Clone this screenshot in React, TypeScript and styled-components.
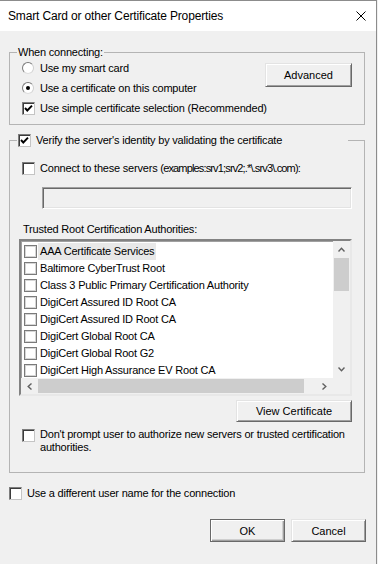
import React from "react";
import styled, { createGlobalStyle, css } from "styled-components";

const GlobalStyle = createGlobalStyle`
  html, body { margin: 0; padding: 0; background: #f0f0f0; }
  body {
    font-family: "Liberation Sans", Arial, sans-serif;
    font-size: 11px;
    letter-spacing: -0.2px;
    color: #000;
  }
  #root { width: 378px; height: 564px; overflow: hidden; }
`;

const Dialog = styled.div`
  width: 376px;
  height: 563px;
  border-top: 1px solid #8c8c8c;
  border-right: 1px solid #8c8c8c;
  background: #f0f0f0;
  display: flex;
  flex-direction: column;
`;

const TitleBar = styled.div`
  height: 30px;
  flex: none;
  background: #fff;
  display: flex;
  align-items: center;
  justify-content: space-between;
  padding: 0 10px 0 8px;
`;

const Title = styled.span`
  font-size: 12px;
  letter-spacing: -0.15px;
  line-height: 16px;
`;

const CloseButton = styled.span`
  display: flex;
  width: 10px;
  height: 10px;
  margin-top: -1px;
`;

const Body = styled.div`
  flex: 1;
  display: flex;
  flex-direction: column;
  padding: 15px 11px 0 9px;
`;

const GroupBox = styled.fieldset<{ $mt?: number }>`
  margin: ${(p) => p.$mt ?? 0}px 0 0 0;
  padding: 0;
  min-width: 0;
  border: 1px solid #b4b4b4;
`;

const Legend = styled.legend<{ $width?: number }>`
  margin-left: 7px;
  padding: 0 1px;
  height: 13px;
  line-height: 13px;
  display: flex;
  align-items: center;
  white-space: nowrap;
  ${(p) => p.$width && css`width: ${p.$width}px; box-sizing: border-box;`}
`;

const ConnectContent = styled.div`
  display: flex;
  justify-content: space-between;
  align-items: flex-start;
  margin-top: -1px;
  padding: 0 12px 6px 12px;
`;

const OptionColumn = styled.div`
  display: flex;
  flex-direction: column;
  min-width: 0;
`;

const OptionRow = styled.label<{ $h?: number; $top?: boolean; $mt?: number }>`
  display: flex;
  align-items: ${(p) => (p.$top ? "flex-start" : "center")};
  height: ${(p) => (p.$h ? `${p.$h}px` : "auto")};
  margin-top: ${(p) => p.$mt ?? 0}px;
  line-height: 13px;
  white-space: ${(p) => (p.$top ? "normal" : "pre")};
  cursor: default;
`;

const Tight = styled.span`
  letter-spacing: -0.85px;
`;

const CheckBox = styled.span<{ $flat?: boolean; $mt?: number }>`
  width: 13px;
  height: 13px;
  box-sizing: border-box;
  flex: none;
  margin-right: 5px;
  margin-top: ${(p) => p.$mt ?? 0}px;
  background: #fff;
  display: flex;
  align-items: center;
  justify-content: center;
  ${(p) =>
    p.$flat
      ? css`
          border: 1px solid #7a7a7a;
          box-shadow: inset 0 0 0 1px #d6d6d6;
        `
      : css`
          border: 1px solid;
          border-color: #7d7d7d #c4c4c4 #c4c4c4 #7d7d7d;
          box-shadow: inset 1px 1px 0 #3c3c3c;
        `}
`;

const RadioCircle = styled.span<{ $checked?: boolean }>`
  width: 12px;
  height: 12px;
  box-sizing: border-box;
  flex: none;
  margin-right: 6px;
  border-radius: 50%;
  border: 1px solid;
  border-color: #7a7a7a #cfcfcf #dcdcdc #7a7a7a;
  background: #fff;
  display: flex;
  align-items: center;
  justify-content: center;
  &::after {
    content: "";
    width: 4px;
    height: 4px;
    border-radius: 50%;
    background: ${(p) => (p.$checked ? "#000" : "transparent")};
  }
`;

const PushButton = styled.button<{ $w: number; $h?: number; $mt?: number; $end?: boolean; $default?: boolean }>`
  width: ${(p) => p.$w}px;
  height: ${(p) => p.$h ?? 22}px;
  margin-top: ${(p) => p.$mt ?? 0}px;
  align-self: ${(p) => (p.$end ? "flex-end" : "auto")};
  flex: none;
  padding: 0;
  font: inherit;
  color: #000;
  background: #f0f0f0;
  border: 1px solid;
  border-color: #e3e3e3 #696969 #696969 #e3e3e3;
  box-shadow: inset 1px 1px 0 #fff, inset -1px -1px 0 #a0a0a0;
  ${(p) =>
    p.$default &&
    css`
      border-color: #696969;
      box-shadow: inset 1px 1px 0 #fff, inset -1px -1px 0 #a0a0a0, inset -2px -2px 0 #cfcfcf;
    `}
`;

const VerifyContent = styled.div`
  display: flex;
  flex-direction: column;
  align-items: flex-start;
  padding: 0 12px 18px 12px;
`;

const ServerInput = styled.div`
  width: 310px;
  height: 22px;
  box-sizing: border-box;
  margin: 12px 0 0 20px;
  background: #f0f0f0;
  border: 1px solid;
  border-color: #a0a0a0 #fff #fff #a0a0a0;
  box-shadow: inset 1px 1px 0 #696969, inset -1px -1px 0 #e3e3e3;
`;

const FieldLabel = styled.div`
  margin: 14px 0 0 1px;
  line-height: 13px;
`;

const ListBox = styled.div`
  width: 333px;
  height: 157px;
  box-sizing: border-box;
  margin: 3px 0 0 -3px;
  border: 2px solid;
  border-color: #828282 #e8e8e8 #e8e8e8 #828282;
  box-shadow: inset 1px 1px 0 #a0a0a0;
  background: #fff;
  display: grid;
  grid-template-columns: 1fr 17px;
  grid-template-rows: 1fr 16px;
  overflow: hidden;
`;

const Items = styled.div`
  padding-top: 2px;
  overflow: hidden;
`;

const ItemRow = styled.div`
  height: 17px;
  display: flex;
  align-items: center;
  padding-left: 3px;
  white-space: nowrap;
`;

const ItemText = styled.span<{ $focused?: boolean }>`
  margin-left: -4px;
  padding: 0 2px;
  line-height: 17px;
  background: ${(p) => (p.$focused ? "#e8e8e8" : "transparent")};
`;

const VScroll = styled.div`
  background: #f0f0f0;
  display: flex;
  flex-direction: column;
`;

const HScroll = styled.div`
  background: #f0f0f0;
  display: flex;
  align-items: stretch;
`;

const Corner = styled.div`
  background: #f0f0f0;
`;

const ArrowCell = styled.div<{ $horizontal?: boolean }>`
  flex: none;
  width: ${(p) => (p.$horizontal ? "17px" : "auto")};
  height: ${(p) => (p.$horizontal ? "auto" : "17px")};
  display: flex;
  align-items: center;
  justify-content: center;
`;

const Thumb = styled.div<{ $horizontal?: boolean; $size: number }>`
  flex: none;
  background: #cdcdcd;
  ${(p) =>
    p.$horizontal
      ? css`width: ${p.$size}px; margin: 1px 0;`
      : css`height: ${p.$size}px; margin: 0 1px;`}
`;

const Track = styled.div`
  flex: 1;
`;

const WrapText = styled.span`
  width: 312px;
`;

const ButtonBar = styled.div`
  display: flex;
  justify-content: flex-end;
  gap: 6px;
  margin: 19px -1px 0 0;
`;

const CheckMark = () => (
  <svg width="9" height="9" viewBox="0 0 9 9">
    <polyline points="1,4 3.3,6.5 8,1.6" fill="none" stroke="#000" strokeWidth="1.9" />
  </svg>
);

type Dir = "up" | "down" | "left" | "right";
const Chevron = ({ dir }: { dir: Dir }) => {
  const vertical = dir === "up" || dir === "down";
  const pts: Record<Dir, string> = {
    up: "0.5,4.5 3.5,1.2 6.5,4.5",
    down: "0.5,0.5 3.5,3.8 6.5,0.5",
    left: "4.5,0.5 1.2,3.5 4.5,6.5",
    right: "0.5,0.5 3.8,3.5 0.5,6.5",
  };
  return (
    <svg width={vertical ? 7 : 5} height={vertical ? 5 : 7} viewBox={vertical ? "0 0 7 5" : "0 0 5 7"}>
      <polyline points={pts[dir]} fill="none" stroke="#606060" strokeWidth="1.4" />
    </svg>
  );
};

const CloseIcon = () => (
  <svg width="10" height="10" viewBox="0 0 10 10">
    <path d="M0.5 0.5 L9.5 9.5 M9.5 0.5 L0.5 9.5" stroke="#000" strokeWidth="1" fill="none" />
  </svg>
);

const Check = ({ checked, flat, mt }: { checked?: boolean; flat?: boolean; mt?: number }) => (
  <CheckBox $flat={flat} $mt={mt}>{checked && <CheckMark />}</CheckBox>
);

const certificates = [
  "AAA Certificate Services",
  "Baltimore CyberTrust Root",
  "Class 3 Public Primary Certification Authority",
  "DigiCert Assured ID Root CA",
  "DigiCert Assured ID Root CA",
  "DigiCert Global Root CA",
  "DigiCert Global Root G2",
  "DigiCert High Assurance EV Root CA",
];

export default function App() {
  return (
    <>
      <GlobalStyle />
      <Dialog>
        <TitleBar>
          <Title>Smart Card or other Certificate Properties</Title>
          <CloseButton>
            <CloseIcon />
          </CloseButton>
        </TitleBar>
        <Body>
          <GroupBox>
            <Legend>When connecting:</Legend>
            <ConnectContent>
              <OptionColumn>
                <OptionRow $h={20}>
                  <RadioCircle />
                  Use my smart card
                </OptionRow>
                <OptionRow $h={20}>
                  <RadioCircle $checked />
                  Use a certificate on this computer
                </OptionRow>
                <OptionRow $h={20}>
                  <Check checked />
                  Use simple certificate selection (Recommended)
                </OptionRow>
              </OptionColumn>
              <PushButton $w={87} $h={24} $mt={5}>
                Advanced
              </PushButton>
            </ConnectContent>
          </GroupBox>

          <GroupBox $mt={9}>
            <Legend $width={331}>
              <Check checked />
              Verify the server's identity by validating the certificate
            </Legend>
            <VerifyContent>
              <OptionRow $h={13} $mt={15}>
                <Check />
                {"Connect to these servers "}
                <Tight>(examples:srv1;srv2;.*\.srv3\.com):</Tight>
              </OptionRow>
              <ServerInput />
              <FieldLabel>Trusted Root Certification Authorities:</FieldLabel>
              <ListBox>
                <Items>
                  {certificates.map((name, i) => (
                    <ItemRow key={i}>
                      <Check flat />
                      <ItemText $focused={i === 0}>{name}</ItemText>
                    </ItemRow>
                  ))}
                </Items>
                <VScroll>
                  <ArrowCell>
                    <Chevron dir="up" />
                  </ArrowCell>
                  <Thumb $size={33} />
                  <Track />
                  <ArrowCell>
                    <Chevron dir="down" />
                  </ArrowCell>
                </VScroll>
                <HScroll>
                  <ArrowCell $horizontal>
                    <Chevron dir="left" />
                  </ArrowCell>
                  <Thumb $horizontal $size={266} />
                  <Track />
                  <ArrowCell $horizontal>
                    <Chevron dir="right" />
                  </ArrowCell>
                </HScroll>
                <Corner />
              </ListBox>
              <PushButton $w={116} $mt={4} $end>
                View Certificate
              </PushButton>
              <OptionRow $top $mt={6}>
                <Check mt={1} />
                <WrapText>
                  Don't prompt user to authorize new servers or trusted certification authorities.
                </WrapText>
              </OptionRow>
            </VerifyContent>
          </GroupBox>

          <OptionRow $h={13} $mt={14}>
            <Check />
            Use a different user name for the connection
          </OptionRow>

          <ButtonBar>
            <PushButton $w={75} $h={23} $default>
              OK
            </PushButton>
            <PushButton $w={75} $h={23}>
              Cancel
            </PushButton>
          </ButtonBar>
        </Body>
      </Dialog>
    </>
  );
}
